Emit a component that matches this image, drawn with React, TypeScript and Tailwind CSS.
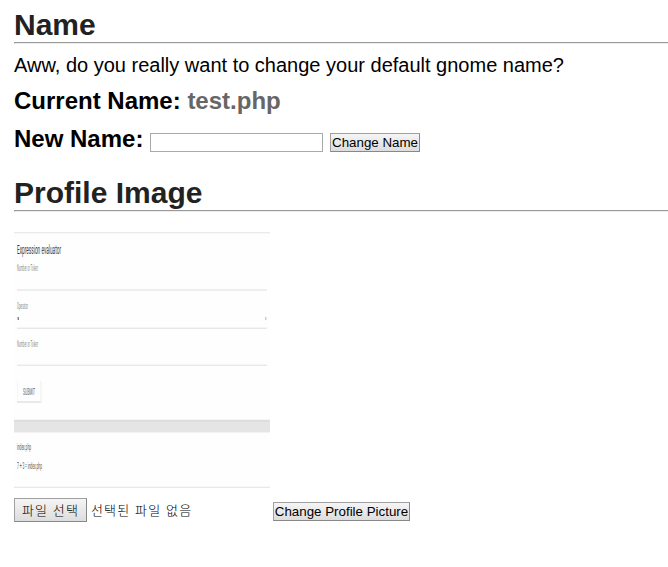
import type { ReactNode } from "react";

function SectionTitle({ children }: { children: ReactNode }) {
  return (
    <>
      <h1 className="h-[34px] text-[30px] leading-[34px] font-bold text-[#222222]">{children}</h1>
      <div className="h-[2px] border-t border-b border-l border-t-[#999999] border-b-[#ececec] border-l-[#aaaaaa]" />
    </>
  );
}

function SmallButton({ children, className }: { children: ReactNode; className: string }) {
  return (
    <button
      type="button"
      className={`h-[19px] shrink-0 border border-[#a0a0a0] border-r-[#888888] border-b-[#888888] bg-linear-to-b from-[#f5f5f5] to-[#dddddd] p-0 text-center leading-[17px] whitespace-nowrap text-black ${className}`}
    >
      {children}
    </button>
  );
}

/* The uploaded avatar: a wide form screenshot squeezed into a square. */
function ProfileThumbnail() {
  return (
    <svg
      className="block h-[256px] w-[256px]"
      viewBox="0 0 256 256"
      fontFamily="Roboto, sans-serif"
      role="img"
    >
      <rect width="256" height="256" fill="#fefefe" />
      <rect width="256" height="1" fill="#ebebeb" />
      <rect y="1" width="256" height="1" fill="#f7f7f7" />
      <text x="3" y="22" fontSize="12.5" fill="#3c3c3c" textLength="44" lengthAdjust="spacingAndGlyphs">Expression evaluator</text>
      <text x="3" y="38.5" fontSize="8.5" fill="#8a8a8a" textLength="21" lengthAdjust="spacingAndGlyphs">Number or Token</text>
      <rect x="3" y="57" width="250" height="2" fill="#eeeeee" />
      <text x="3" y="76.5" fontSize="8.5" fill="#8a8a8a" textLength="11" lengthAdjust="spacingAndGlyphs">Operator</text>
      <rect x="3.5" y="85" width="1.5" height="3" fill="#888" />
      <rect x="251" y="85" width="1.5" height="3" fill="#cccccc" />
      <rect x="3" y="95" width="250" height="1" fill="#f4f4f4" />
      <rect x="3" y="96" width="250" height="1" fill="#e8e8e8" />
      <text x="3" y="114.5" fontSize="8.5" fill="#8a8a8a" textLength="21" lengthAdjust="spacingAndGlyphs">Number or Token</text>
      <rect x="3" y="132" width="250" height="1" fill="#f5f5f5" />
      <rect x="3" y="133" width="250" height="1" fill="#e9e9e9" />
      <rect x="3" y="149" width="25" height="22" fill="#f6f6f6" />
      <rect x="3" y="169" width="24" height="2" fill="#e8e8e8" />
      <rect x="4" y="149" width="22" height="20" fill="#fefefe" />
      <text x="9" y="162.5" fontSize="9.5" fill="#666" textLength="12" lengthAdjust="spacingAndGlyphs">SUBMIT</text>
      <rect y="187" width="256" height="1" fill="#f5f5f5" />
      <rect y="188" width="256" height="12" fill="#e5e5e5" />
      <rect y="188" width="256" height="2" fill="#dedede" />
      <rect y="200" width="256" height="1" fill="#f3f3f3" />
      <text x="3" y="217.5" fontSize="9.5" fill="#555" textLength="14" lengthAdjust="spacingAndGlyphs">index.php</text>
      <text x="3" y="236.5" fontSize="9.5" fill="#555" textLength="25" lengthAdjust="spacingAndGlyphs">7 + 3 = index.php</text>
      <rect y="254" width="256" height="1" fill="#f7f7f7" />
      <rect y="255" width="256" height="1" fill="#e9e9e9" />
    </svg>
  );
}

export default function App() {
  return (
    <main className="h-[567px] w-[668px] overflow-hidden bg-white pt-[8px] pl-[14px] font-['Liberation_Sans',Arial,sans-serif] text-black">
      <section>
        <SectionTitle>Name</SectionTitle>
        <p className="mt-[9px] h-[24px] text-[20px] leading-[24px] whitespace-nowrap">
          Aww, do you really want to change your default gnome name?
        </p>
        <h2 className="mt-[10px] h-[28px] text-[24px] leading-[28px] font-bold">
          Current Name: <span className="text-[#666666]">test.php</span>
        </h2>
        <form className="mt-[10px] flex h-[28px] items-start">
          <label htmlFor="name" className="w-[136px] shrink-0 text-[24px] leading-[28px] font-bold whitespace-nowrap">
            New Name:
          </label>
          <input id="name" className="mt-[8px] h-[19px] w-[173px] border border-[#a9a9a9] bg-white" />
          <SmallButton className="mt-[8px] ml-[7px] w-[90px] text-[13.333px]">Change Name</SmallButton>
        </form>
      </section>

      <section className="mt-[23px]">
        <SectionTitle>Profile Image</SectionTitle>
        <div className="mt-[20px]">
          <ProfileThumbnail />
        </div>
        <form className="mt-[10px] flex items-start">
          <div className="flex w-[259px] items-center font-['Liberation_Sans','Noto_Sans_CJK_KR',sans-serif] text-[13px] tracking-[1.15px]">
            <button
              type="button"
              className="h-[24px] w-[73px] border border-[#a0a0a0] border-r-[#888888] border-b-[#888888] bg-linear-to-b from-[#f5f5f5] to-[#dddddd] pt-[2px] font-light leading-[20px] whitespace-nowrap"
            >
              파일 선택
            </button>
            <span className="ml-[4px] pt-[2px] font-light leading-[22px] whitespace-nowrap">선택된 파일 없음</span>
          </div>
          <SmallButton className="mt-[4px] w-[137px] text-[13.333px]">Change Profile Picture</SmallButton>
        </form>
      </section>
    </main>
  );
}
